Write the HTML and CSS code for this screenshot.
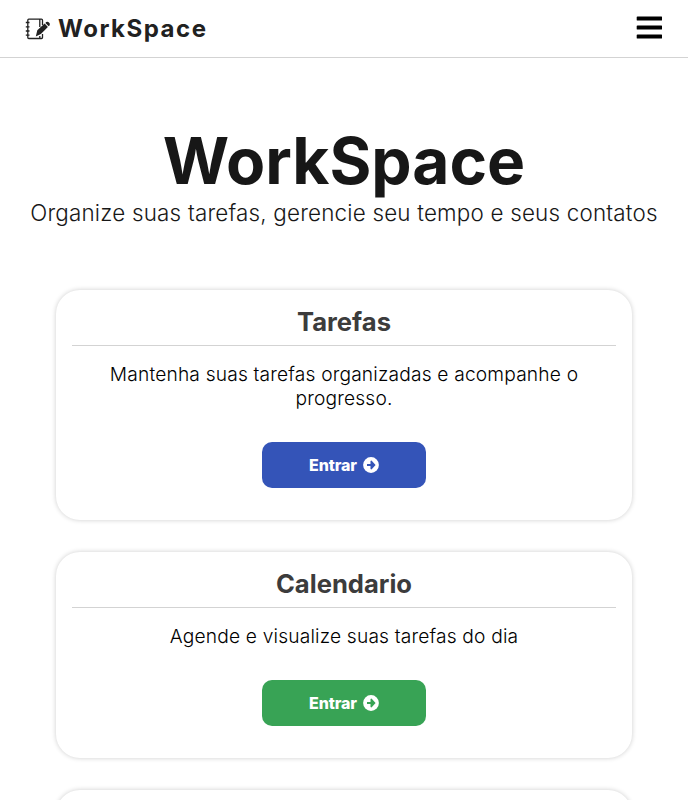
FILE: index.html
```html
<!DOCTYPE html>
<html lang="pt-BR">
<head>
<meta charset="utf-8">
<title>WorkSpace</title>
<link rel="stylesheet" href="styles.css">
</head>
<body>
<header class="navbar">
  <a class="brand">
    <svg class="brand-icon" viewBox="0 0 26 22" fill="none" stroke="#212121" stroke-width="1.3">
      <path d="M17.500 7V2.200Q17.500 1.200 16.500 1.200H3.800Q2.800 1.200 2.800 2.200V19.500Q2.800 20.500 3.800 20.500H16.500Q17.500 20.500 17.500 19.500V16M14.800 1.500V9M14.800 18V20.500M.8 4.500H4.500M.8 8.800H4.500M.8 13H4.500M.8 17.200H4.500"/>
      <path d="M10.800 18.500l1.500-6.200 7.300-6.800 3.300 3.400-7 7.200zM20.400 4.900l.8-.8q1.400-1 2.800.3t.7 2.800l-1 1.100z" fill="#212121" stroke="none"/>
    </svg>
    <span>WorkSpace</span>
  </a>
  <svg class="menu" viewBox="0 0 26 24"><path d="M1.500 0.500h24q.5 0 .5.500v3q0 .6-.5.600H1.500q-.8 0-.8-.6V1q0-.5.8-.5zM1.500 9.500h24q.5 0 .5.500v3q0 .6-.5.600H1.500q-.8 0-.8-.6v-3q0-.5.8-.5zM1.500 18.500h24q.5 0 .5.500v3q0 .6-.5.600H1.500q-.8 0-.8-.6v-3q0-.5.8-.5z"/></svg>
</header>
<main>
  <section class="hero">
    <h1>WorkSpace</h1>
    <p>Organize suas tarefas, gerencie seu tempo e seus contatos</p>
  </section>
  <section class="cards">
    <article class="card">
      <h2>Tarefas</h2>
      <p>Mantenha suas tarefas organizadas e acompanhe o progresso.</p>
      <a class="btn blue">Entrar <svg viewBox="0 0 16 16"><circle cx="8" cy="8" r="7.900" fill="#fff"/><path d="M4 6.900H7.500V3.900L8.500 3.600 12.600 8 8.500 12.400 7.500 12.100V9.100H4z"/></svg></a>
    </article>
    <article class="card">
      <h2>Calendario</h2>
      <p>Agende e visualize suas tarefas do dia</p>
      <a class="btn green">Entrar <svg viewBox="0 0 16 16"><circle cx="8" cy="8" r="7.900" fill="#fff"/><path d="M4 6.900H7.500V3.900L8.500 3.600 12.600 8 8.500 12.400 7.500 12.100V9.100H4z"/></svg></a>
    </article>
    <article class="card"></article>
  </section>
</main>
</body>
</html>
```
FILE: styles.css
```css
* { box-sizing: border-box; margin: 0; }
body { height: 800px; overflow: hidden; background: #fff; color: #000; font-family: Inter, sans-serif; }
.navbar { display: flex; justify-content: space-between; align-items: center; height: 58px; padding: 0 26px 0 25px; border-bottom: 1px solid #d3d3d3; }
.brand { display: flex; align-items: center; gap: 7px; font-size: 24px; font-weight: 700; letter-spacing: 1.5px; color: #212121; }
.brand-icon { width: 26px; height: 22px; }
.menu { width: 26px; height: 24px; margin-bottom: 2px; }
.hero { padding-top: 64px; text-align: center; }
.hero h1 { font-size: 64px; line-height: 77px; font-weight: 700; color: #171717; }
.hero p { font-size: 22.400px; line-height: 28px; font-weight: 300; letter-spacing: 0.2px; color: #171717; white-space: nowrap; }
.cards { display: grid; gap: 32px; padding: 63px 56px 0; }
.card { display: flex; flex-direction: column; align-items: center; padding: 16px 16px 32px; border-radius: 24px; box-shadow: 0 0 5px rgba(0, 0, 0, .2); text-align: center; }
.card h2 { width: 100%; height: 40px; font-size: 25.600px; line-height: 32px; font-weight: 700; color: #3c3c3c; border-bottom: 1px solid #d3d3d3; }
.card p { margin: 16px 0 32px; padding: 0 16px; font-size: 19.200px; line-height: 24px; font-weight: 300; letter-spacing: 0.17px; }
.btn { display: flex; align-items: center; justify-content: center; gap: 6px; width: 164px; height: 46px; border-radius: 10px; color: #fff; font-size: 16px; font-weight: 800; letter-spacing: -0.1px; }
.btn svg { width: 16px; height: 16px; }
.blue { background: #3454b8; fill: #3454b8; }
.green { background: #38a355; fill: #38a355; }
```
